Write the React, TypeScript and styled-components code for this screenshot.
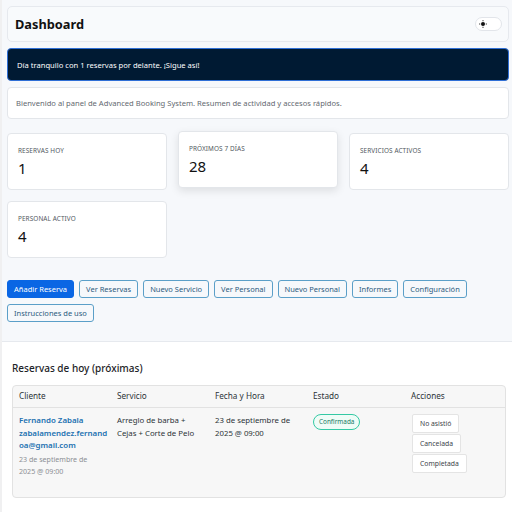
import styled, { createGlobalStyle } from "styled-components";

const GlobalStyle = createGlobalStyle`
  html, body {
    margin: 0;
    padding: 0;
    background: #f0f0f1;
    font-family: "Noto Sans", "Open Sans", sans-serif;
    color: #1d2327;
  }
  * { box-sizing: border-box; }
`;

const Shell = styled.div`
  margin-left: 2px;
  background: #f6f8fb;
  min-height: 512px;
`;

const Top = styled.div`
  padding: 6px 3px 0 5px;
  display: flex;
  flex-direction: column;
  gap: 6px;
`;

const Header = styled.div`
  height: 36px;
  background: #f8fafc;
  border: 1px solid #e6e9ee;
  border-radius: 5px;
  display: flex;
  align-items: center;
  justify-content: space-between;
  padding: 0 6px 0 7px;
  h1 {
    margin: 0;
    font-size: 12.8px;
    font-weight: 700;
    color: #111;
  }
`;

const Toggle = styled.div`
  width: 27px;
  height: 14px;
  border-radius: 7px;
  background: #fff;
  border: 1px solid #e2e5ea;
  display: flex;
  align-items: center;
  padding-left: 3px;
`;

const Alert = styled.div`
  height: 33px;
  background: #001a33;
  border: 1px solid #2f6fd6;
  border-radius: 4px;
  color: #fff;
  font-size: 7.6px;
  display: flex;
  align-items: center;
  padding-left: 9px;
`;

const Intro = styled.div`
  height: 32px;
  background: #fff;
  border: 1px solid #e3e6ea;
  border-radius: 4px;
  color: #646970;
  font-size: 7.6px;
  display: flex;
  align-items: center;
  padding-left: 8px;
`;

const Stats = styled.div`
  margin-top: 8px;
  display: grid;
  grid-template-columns: repeat(3, 1fr);
  gap: 11px;
`;

const Stat = styled.div<{ $raised?: boolean }>`
  height: 57px;
  background: #fff;
  border: 1px solid #e3e6ea;
  border-radius: 4px;
  padding: 12px 10px 0;
  transform: ${(p) => (p.$raised ? "translateY(-2px)" : "none")};
  box-shadow: ${(p) => (p.$raised ? "0 3px 8px rgba(0,0,0,0.10)" : "none")};
`;

const StatLabel = styled.div`
  font-size: 6.4px;
  color: #50575e;
  text-transform: uppercase;
  letter-spacing: 0.1px;
`;

const StatValue = styled.div`
  font-size: 15px;
  color: #111;
  margin-top: 3px;
`;

const Actions = styled.div`
  margin-top: 16px;
  display: flex;
  flex-wrap: wrap;
  gap: 6px 5px;
`;

const Btn = styled.button<{ $primary?: boolean }>`
  height: 18px;
  padding: 0 6px;
  border-radius: 3px;
  font-family: inherit;
  font-size: 7.5px;
  border: 1px solid ${(p) => (p.$primary ? "#0a66e4" : "#5b9fc8")};
  background: ${(p) => (p.$primary ? "#0a66e4" : "#f6f8fb")};
  color: ${(p) => (p.$primary ? "#fff" : "#2c5a7e")};
`;

const Panel = styled.div`
  margin-top: 19px;
  background: #fff;
  border-top: 1px solid #e6e9ee;
  padding: 19px 6px 16px 10px;
  h2 {
    margin: 0 0 10px;
    font-size: 10px;
    font-weight: 500;
    color: #1d2327;
  }
`;

const TableBox = styled.div`
  background: #f7f7f7;
  border: 1px solid #e2e2e2;
  border-radius: 4px;
  height: 113px;
`;

const Row = styled.div<{ $head?: boolean }>`
  display: grid;
  grid-template-columns: repeat(5, 98px);
  padding: ${(p) => (p.$head ? "0 0 0 6px" : "6px 0 5px 6px")};
  height: ${(p) => (p.$head ? "22px" : "auto")};
  align-items: ${(p) => (p.$head ? "center" : "start")};
  border-bottom: ${(p) => (p.$head ? "1px solid #e2e2e2" : "none")};
  font-size: ${(p) => (p.$head ? "8.2px" : "7.8px")};
  color: #2c3338;
`;

const Cell = styled.div`
  line-height: 12.6px;
  padding-right: 9px;
`;

const ClientLink = styled.div`
  width: 92px;
  color: #2271b1;
  font-weight: 600;
  font-size: 7.9px;
  line-height: 12.6px;
  word-break: break-all;
`;

const Muted = styled.div`
  color: #8c8f94;
  font-size: 7.1px;
  line-height: 12px;
  margin-top: 1px;
  max-width: 82px;
`;

const Badge = styled.span`
  display: inline-block;
  font-size: 6.4px;
  padding: 3px 5px;
  border: 1px solid #34c9a4;
  border-radius: 8px;
  background: #effcf7;
  color: #157a62;
  line-height: 8px;
`;

const ActionList = styled.div`
  display: flex;
  flex-direction: column;
  align-items: flex-start;
  padding-left: 1px;
`;

const SmallBtn = styled.button`
  height: 19px;
  margin-bottom: 1px;
  padding: 0 7px;
  font-family: inherit;
  font-size: 6.8px;
  color: #3c434a;
  background: #fff;
  border: 1px solid #e4e4e4;
  border-radius: 2px;
`;

function SunIcon() {
  return (
    <svg width="8" height="8" viewBox="0 0 16 16">
      <circle cx="8" cy="8" r="4" fill="#111" />
      <g stroke="#111" strokeWidth="1.6">
        <line x1="8" y1="0" x2="8" y2="2.5" />
        <line x1="8" y1="13.5" x2="8" y2="16" />
        <line x1="0" y1="8" x2="2.5" y2="8" />
        <line x1="13.5" y1="8" x2="16" y2="8" />
      </g>
    </svg>
  );
}

const stats = [
  { label: "Reservas hoy", value: "1" },
  { label: "Próximos 7 días", value: "28", raised: true },
  { label: "Servicios activos", value: "4" },
  { label: "Personal activo", value: "4" },
];

const links = [
  "Ver Reservas",
  "Nuevo Servicio",
  "Ver Personal",
  "Nuevo Personal",
  "Informes",
  "Configuración",
  "Instrucciones de uso",
];

export default function App() {
  return (
    <>
      <GlobalStyle />
      <Shell>
        <Top>
          <Header>
            <h1>Dashboard</h1>
            <Toggle>
              <SunIcon />
            </Toggle>
          </Header>
          <Alert>Día tranquilo con 1 reservas por delante. ¡Sigue así!</Alert>
          <Intro>
            Bienvenido al panel de Advanced Booking System. Resumen de actividad y accesos rápidos.
          </Intro>
          <Stats>
            {stats.map((s) => (
              <Stat key={s.label} $raised={s.raised}>
                <StatLabel>{s.label}</StatLabel>
                <StatValue>{s.value}</StatValue>
              </Stat>
            ))}
          </Stats>
          <Actions>
            <Btn $primary>Añadir Reserva</Btn>
            {links.map((l) => (
              <Btn key={l}>{l}</Btn>
            ))}
          </Actions>
        </Top>
        <Panel>
          <h2>Reservas de hoy (próximas)</h2>
          <TableBox>
            <Row $head>
              <Cell>Cliente</Cell>
              <Cell>Servicio</Cell>
              <Cell>Fecha y Hora</Cell>
              <Cell>Estado</Cell>
              <Cell>Acciones</Cell>
            </Row>
            <Row>
              <Cell>
                <ClientLink>Fernando Zabala</ClientLink>
                <ClientLink>zabalamendez.fernandoa@gmail.com</ClientLink>
                <Muted>23 de septiembre de 2025 @ 09:00</Muted>
              </Cell>
              <Cell>Arreglo de barba + Cejas + Corte de Pelo</Cell>
              <Cell>23 de septiembre de 2025 @ 09:00</Cell>
              <Cell>
                <Badge>Confirmada</Badge>
              </Cell>
              <Cell>
                <ActionList>
                  <SmallBtn>No asistió</SmallBtn>
                  <SmallBtn>Cancelada</SmallBtn>
                  <SmallBtn>Completada</SmallBtn>
                </ActionList>
              </Cell>
            </Row>
          </TableBox>
        </Panel>
      </Shell>
    </>
  );
}
